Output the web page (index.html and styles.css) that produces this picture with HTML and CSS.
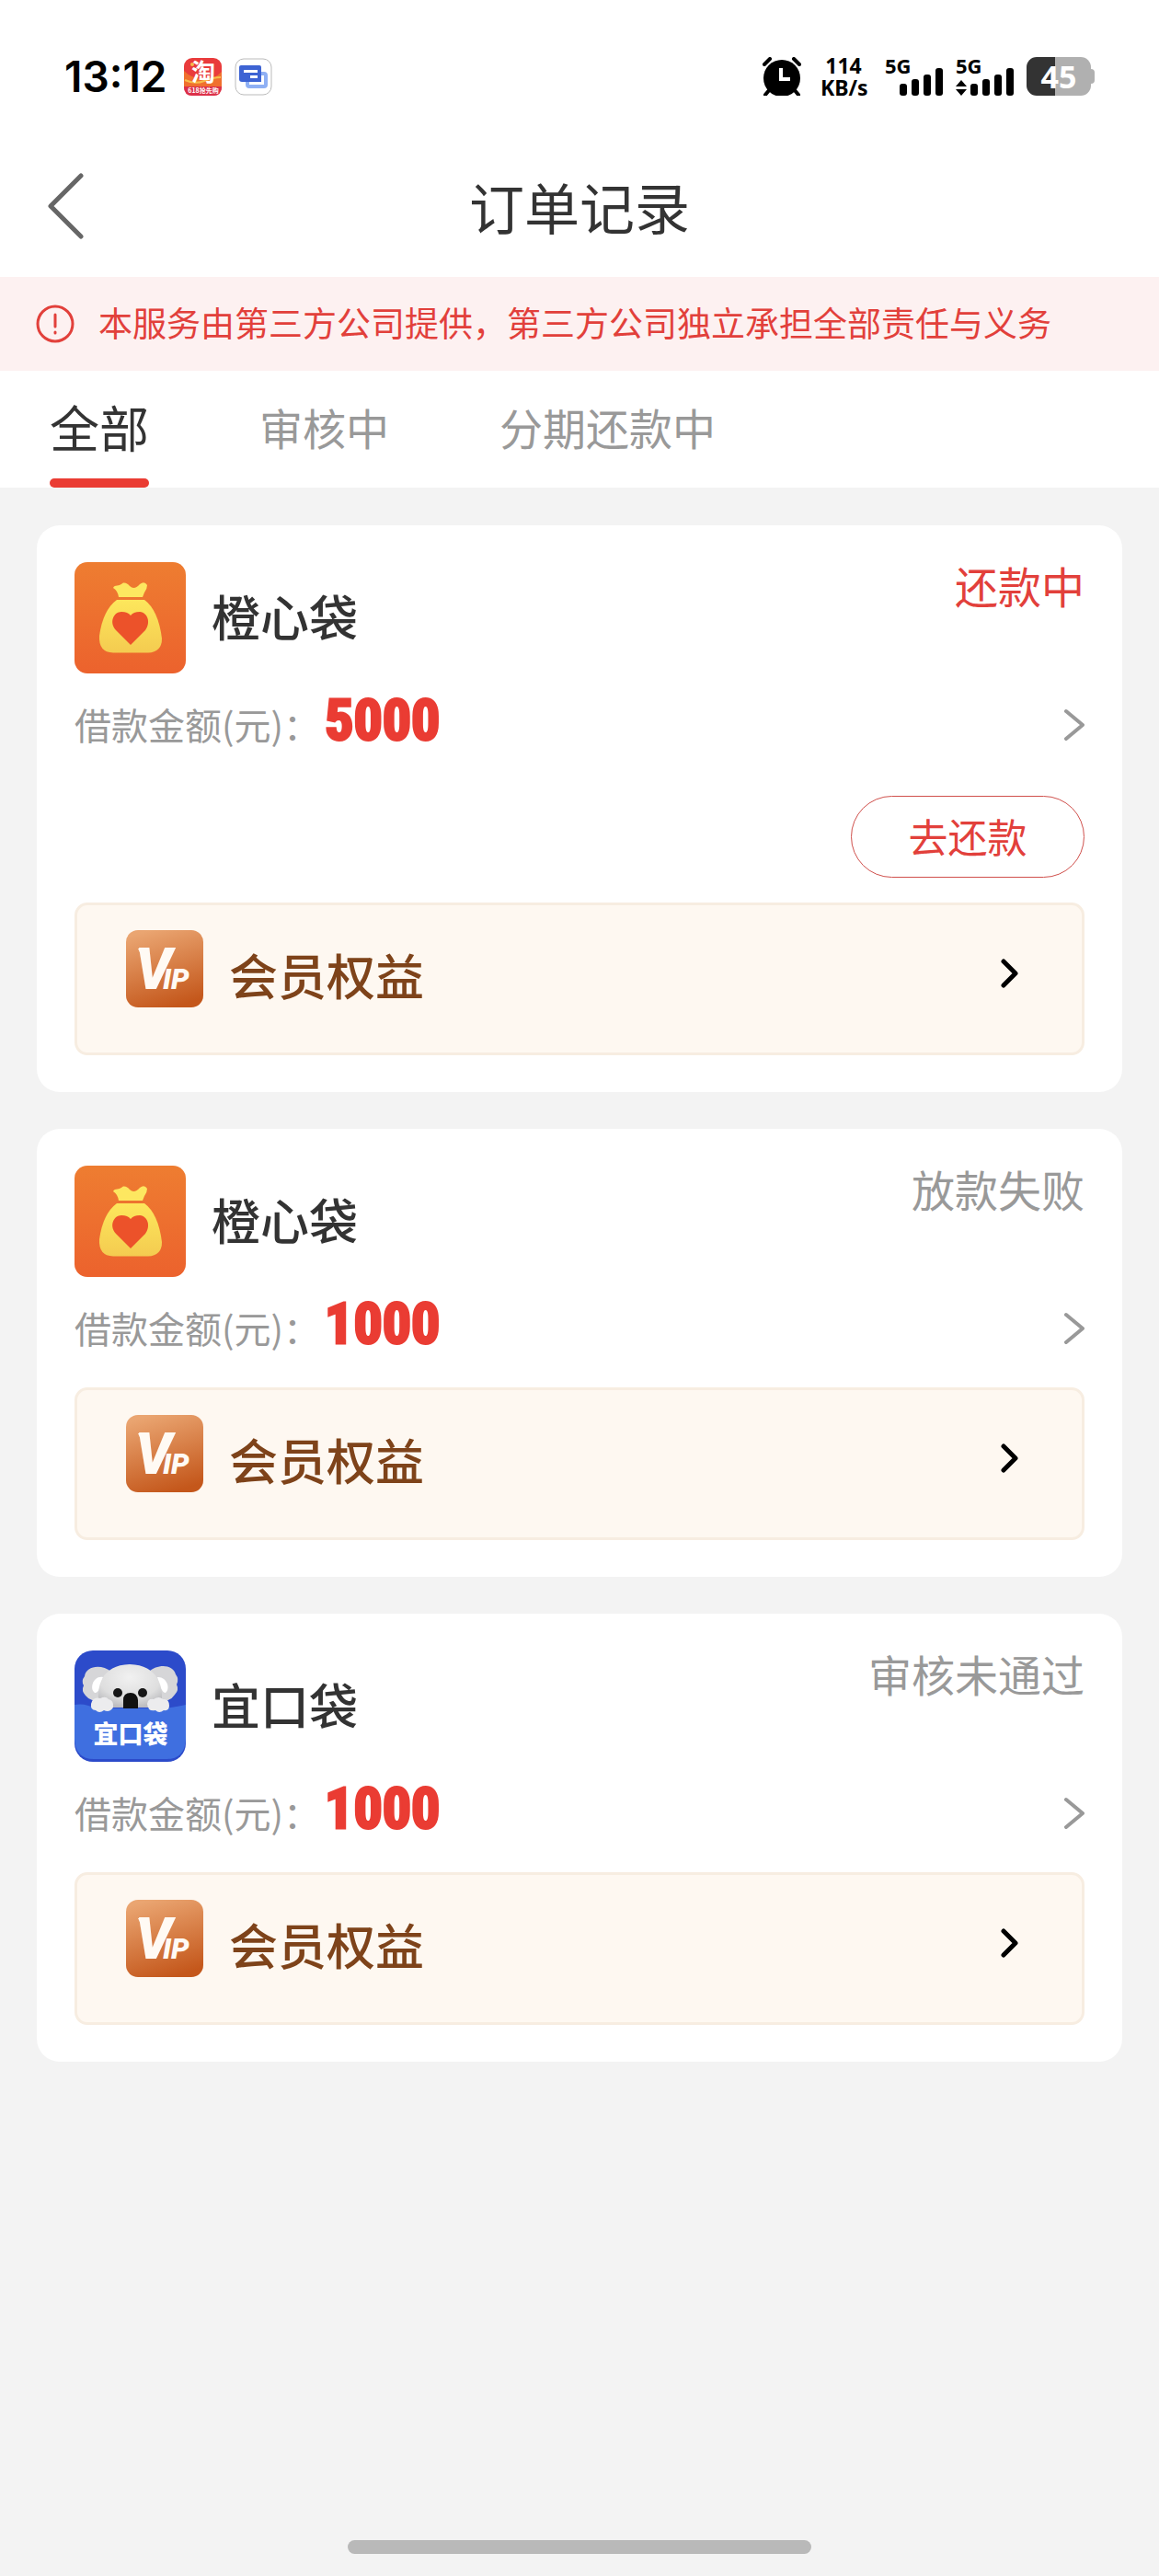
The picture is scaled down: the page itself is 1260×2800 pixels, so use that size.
FILE: index.html
```html
<!DOCTYPE html>
<html lang="zh-CN">
<head>
<meta charset="utf-8">
<meta name="viewport" content="width=device-width, initial-scale=1">
<title>订单记录</title>
<link rel="stylesheet" href="styles.css">
</head>
<body>
<svg class="defs" width="0" height="0" aria-hidden="true">
  <defs>
    <linearGradient id="orange" x1="0" y1="0" x2="0" y2="1"><stop offset="0" stop-color="#ee7d31"/><stop offset="1" stop-color="#ec622d"/></linearGradient>
    <linearGradient id="gold" x1="0" y1="0" x2="0" y2="1"><stop offset="0" stop-color="#fde75c"/><stop offset="1" stop-color="#f4cb50"/></linearGradient>
    <linearGradient id="copper" x1="0.3" y1="0" x2="0.6" y2="1"><stop offset="0" stop-color="#eaa571"/><stop offset="1" stop-color="#c4571b"/></linearGradient>
    <radialGradient id="fur" cx="0.5" cy="0.3" r="0.7"><stop offset="0" stop-color="#f1f1f1"/><stop offset="0.7" stop-color="#dedede"/><stop offset="1" stop-color="#bdbdc0"/></radialGradient>
    <symbol id="bag" viewBox="0 0 121 121">
      <rect width="121" height="121" rx="14" fill="url(#orange)"/>
      <path d="M42 28C44 24 48 27 53 22.500Q57 22 60 26Q65 31 71 24Q76 20 79 25Q79 29 76 33L74 38H48Q47 31 42 28Z" fill="#fde760"/>
      <path d="M46 41H76Q91 52 95 83Q95 98 80 98.500H42Q26 98 27 80Q31 52 46 41Z" fill="url(#gold)"/>
      <path d="M61 90L45 74C37 65 43 54 51 54Q58 54 61 58Q64 54 71 54C80 55 83 66 77 74Z" fill="#ec522a"/>
    </symbol>
    <symbol id="koala" viewBox="0 0 121 121">
      <rect width="121" height="121" rx="20" fill="#2c4bca"/>
      <path d="M40 23C29 14 12 17 11 28Q7 33 10 38Q7 44 12 49Q17 56 33 56H90Q104 56 109 48Q114 43 111 37Q114 31 110 26C107 14 89 15 81 23Z" fill="#d6d6d8"/>
      <path d="M31 29C20 27 16 42 22 46Q27 47 31 29ZM90 29C100 28 105 41 99 46Q94 46 90 29Z" fill="#fff"/>
      <path d="M27 62C23 39 29 16 60 15C91 16 98 39 94 62Z" fill="url(#fur)"/>
      <circle cx="47" cy="46" r="5" fill="#161616"/><circle cx="74" cy="46" r="5" fill="#161616"/>
      <path d="M53 65V54Q53 46 61 46Q68 46 69 54V65Z" fill="#111"/>
      <path d="M0 59Q12 57 22 63H98Q112 61 121 59V96Q120 118 100 118H21Q1 118 0 96Z" fill="#3f6fe0"/>
      <path d="M18 58Q20 50 28 52Q34 49 37 53Q43 54 42 62Q38 68 32 65Q27 69 23 65Q17 65 18 58ZM79 58Q80 52 86 53Q92 49 96 53Q103 52 103 60Q103 66 97 65Q92 69 88 65Q80 67 79 58Z" fill="#ececee"/>
      <text class="koala-word" x="61" y="101" text-anchor="middle">宜口袋</text>
    </symbol>
    <symbol id="vip" viewBox="0 0 84 84">
      <rect width="84" height="84" rx="13" fill="url(#copper)"/>
      <path d="M13 20H24V24H15Z" fill="#fffaf4"/>
      <text class="vip-v" x="10" y="64">V</text>
      <text class="vip-ip" x="40" y="64">IP</text>
    </symbol>
    <symbol id="chevron" viewBox="0 0 22 36"><path d="M2 3L20 18L2 33" fill="none" stroke="currentColor" stroke-width="4" stroke-linecap="round" stroke-linejoin="round"/></symbol>
    <symbol id="chevron-bold" viewBox="0 0 20 34"><path d="M3 4L16 17L3 30" fill="none" stroke="currentColor" stroke-width="5" stroke-linecap="round" stroke-linejoin="round"/></symbol>
    <symbol id="bars" viewBox="0 0 48 30"><rect y="17" width="8" height="13" rx="3"/><rect x="13" y="12" width="8" height="18" rx="3"/><rect x="26" y="7" width="8" height="23" rx="3"/><rect x="39" width="8" height="30" rx="3"/></symbol>
  </defs>
</svg>

<div class="screen">
  <div class="statusbar">
    <div class="status-left">
      <span class="clock">13:12</span>
      <svg class="app" viewBox="0 0 41 41" role="img" aria-label="淘宝">
        <rect width="41" height="41" rx="9" fill="#e93b3c"/>
        <path d="M0 14Q8 22 20 23T41 15V31H0Z" fill="#f0702e"/>
        <path d="M1 24Q12 29 22 25T40 21" fill="none" stroke="#f7bd4b" stroke-width="2"/>
        <circle cx="9" cy="7" r="2" fill="#f7bd4b"/>
        <path d="M0 31H41Q41 41 32 41H9Q0 41 0 31Z" fill="#dc3049"/>
        <text class="tao-word" x="21" y="25" text-anchor="middle">淘</text>
        <text class="tao-tag" x="21" y="38" text-anchor="middle">618抢先购</text>
      </svg>
      <svg class="app" viewBox="0 0 41 41" aria-hidden="true">
        <rect x="1" y="1" width="39" height="39" rx="9" fill="#fff" stroke="#bbb"/>
        <rect x="14" y="17" width="20" height="14" rx="2" fill="none" stroke="#8fb0f4" stroke-width="4"/>
        <path d="M7 8H27Q29 8 29 10V26H8Q5 26 5 23V10Q5 8 7 8Z" fill="#3d63d3"/>
        <path d="M10 13H25V16H10ZM17 19H25V22H17Z" fill="#fff"/>
      </svg>
    </div>
    <div class="status-right">
      <svg class="alarm" viewBox="0 0 44 42" aria-hidden="true">
        <path d="M3 8L9 2M41 8L35 2M9 35L4 41M35 35L40 41" stroke="#000" stroke-width="4" stroke-linecap="round"/>
        <circle cx="22" cy="23" r="20"/>
        <path d="M21 12V24H31" fill="none" stroke="#fff" stroke-width="4"/>
      </svg>
      <div class="speed"><span>114</span><span>KB/s</span></div>
      <div class="signal"><span>5G</span><svg class="bars"><use href="#bars"/></svg></div>
      <div class="signal"><span>5G</span><svg class="updown" viewBox="0 0 12 17" aria-hidden="true"><path d="M6 0L12 7H0ZM6 17L0 10H12Z"/></svg><svg class="bars"><use href="#bars"/></svg></div>
      <div class="battery"><span>45</span></div>
    </div>
  </div>

  <header class="navbar">
    <button class="back" type="button" aria-label="返回"><svg viewBox="0 0 40 72"><path d="M37 3L4 36L37 69" fill="none" stroke="#666" stroke-width="5" stroke-linecap="round" stroke-linejoin="round"/></svg></button>
    <h1>订单记录</h1>
  </header>

  <div class="notice">
    <svg viewBox="0 0 42 42" aria-hidden="true"><circle cx="21" cy="21" r="19" fill="none" stroke="#e2403b" stroke-width="3"/><path d="M21 11V24M21 30V31" stroke="#e2403b" stroke-width="3" stroke-linecap="round"/></svg>
    <p>本服务由第三方公司提供，第三方公司独立承担全部责任与义务</p>
  </div>

  <nav class="tabs">
    <a class="tab active" href="#all" aria-current="page">全部</a>
    <a class="tab" href="#review">审核中</a>
    <a class="tab" href="#repay">分期还款中</a>
  </nav>

  <main class="orders">
    <article class="card">
      <div class="head">
        <svg class="logo" aria-hidden="true"><use href="#bag"/></svg>
        <h2>橙心袋</h2>
        <span class="state due">还款中</span>
      </div>
      <a class="amount" href="#order1"><span class="label">借款金额(元)：</span><strong>5000</strong><svg class="go"><use href="#chevron"/></svg></a>
      <div class="actions"><button class="repay" type="button">去还款</button></div>
      <a class="member" href="#vip"><svg class="vip"><use href="#vip"/></svg><span>会员权益</span><svg class="more"><use href="#chevron-bold"/></svg></a>
    </article>

    <article class="card">
      <div class="head">
        <svg class="logo" aria-hidden="true"><use href="#bag"/></svg>
        <h2>橙心袋</h2>
        <span class="state">放款失败</span>
      </div>
      <a class="amount" href="#order2"><span class="label">借款金额(元)：</span><strong>1000</strong><svg class="go"><use href="#chevron"/></svg></a>
      <a class="member" href="#vip"><svg class="vip"><use href="#vip"/></svg><span>会员权益</span><svg class="more"><use href="#chevron-bold"/></svg></a>
    </article>

    <article class="card">
      <div class="head">
        <svg class="logo" aria-hidden="true"><use href="#koala"/></svg>
        <h2>宜口袋</h2>
        <span class="state">审核未通过</span>
      </div>
      <a class="amount" href="#order3"><span class="label">借款金额(元)：</span><strong>1000</strong><svg class="go"><use href="#chevron"/></svg></a>
      <a class="member" href="#vip"><svg class="vip"><use href="#vip"/></svg><span>会员权益</span><svg class="more"><use href="#chevron-bold"/></svg></a>
    </article>
  </main>

  <div class="home-indicator"></div>
</div>
</body>
</html>
```
FILE: styles.css
```css
* { box-sizing: border-box; }
body {
  margin: 0;
  background: #f3f3f3;
  color: #333;
  font-family: "Noto Sans CJK SC", sans-serif;
}
h1, h2, p { margin: 0; font-weight: 400; }
a { color: inherit; text-decoration: none; }
button { padding: 0; border: 0; background: none; font: inherit; cursor: pointer; }
svg { display: block; flex: none; }
.defs { position: absolute; }

.screen { display: flex; flex-direction: column; min-height: 100vh; }

/* system status bar */
.statusbar {
  display: flex;
  justify-content: space-between;
  height: 149px;
  padding: 62px 70px 0;
  background: #fff;
  color: #000;
  font-family: Inter, sans-serif;
}
.status-left, .status-right { display: flex; align-items: center; height: 42px; }
.status-left { gap: 14px; }
.clock { margin-right: 4px; font-size: 46px; line-height: 42px; font-weight: 600; }
.app { width: 41px; height: 41px; }
.tao-word { fill: #fff; font: 700 26px "Noto Sans CJK SC", sans-serif; }
.tao-tag { fill: #fff; font: 700 7px "Noto Sans CJK SC", sans-serif; }
.alarm { width: 44px; height: 42px; margin-right: 20px; }
.speed {
  display: flex;
  flex-direction: column;
  width: 50px;
  margin-right: 20px;
  font: 700 23px/24px "Noto Sans", sans-serif;
  text-align: center;
}
.signal {
  display: grid;
  grid-template-columns: 16px 48px;
  align-items: end;
  position: relative;
  width: 64px;
  height: 42px;
  margin-right: 13px;
}
.signal span { position: absolute; left: 0; top: 0; font: 700 22px/18px "Noto Sans", sans-serif; }
.bars { grid-column: 2; grid-row: 1; width: 48px; height: 30px; }
.updown { grid-column: 1; grid-row: 1; width: 12px; height: 17px; }
.battery {
  position: relative;
  width: 70px;
  height: 42px;
  margin-right: 4px;
  border-radius: 11px;
  background: linear-gradient(90deg, #333 31px, #b0b0b0 31px);
  color: #fff;
  text-align: center;
  font: 700 34px/42px "Noto Sans", sans-serif;
}
.battery::after {
  content: "";
  position: absolute;
  left: 70px;
  top: 13px;
  width: 4px;
  height: 16px;
  border-radius: 0 4px 4px 0;
  background: #b0b0b0;
}

/* title bar */
.navbar {
  display: grid;
  grid-template-columns: 1fr auto 1fr;
  align-items: center;
  height: 152px;
  padding: 0 51px 2px;
  background: #fff;
}
.back { width: 40px; height: 72px; }
.back svg { width: 40px; height: 72px; }
.navbar h1 { font-size: 60px; line-height: 80px; }

.notice {
  display: flex;
  align-items: center;
  gap: 26px;
  min-height: 102px;
  padding: 0 39px;
  background: #fdf1f1;
  color: #e2403b;
  font-size: 37px;
  line-height: 52px;
}
.notice svg { width: 42px; height: 42px; }
.notice p { padding-bottom: 4px; }

.tabs {
  display: flex;
  gap: 120px;
  height: 127px;
  padding: 0 54px;
  background: #fff;
}
.tab {
  display: flex;
  align-items: center;
  padding-top: 5px;
  border-bottom: 10px solid transparent;
  color: #999;
  font-size: 47px;
  line-height: 72px;
}
.tab.active { position: relative; color: #333; font-size: 54px; }
.tab.active::after {
  content: "";
  position: absolute;
  left: 0;
  right: 0;
  bottom: -10px;
  height: 10px;
  border-radius: 5px;
  background: #ea3c33;
}

/* order cards */
.orders { display: flex; flex-direction: column; gap: 40px; padding: 41px 40px; }
.card { padding: 40px 41px; border-radius: 25px; background: #fff; }
.head { display: flex; align-items: center; }
.logo { width: 121px; height: 121px; }
.head h2 { margin-left: 28px; padding-bottom: 6px; font-size: 53px; line-height: 72px; font-weight: 500; }
.state { align-self: flex-start; margin-left: auto; color: #999; font-size: 47px; line-height: 50px; }
.state.due { color: #e2403b; }
.amount { display: flex; align-items: center; height: 112px; }
.label { padding-bottom: 2px; color: #999; font-size: 40px; line-height: 56px; }
.amount strong {
  margin-left: 5px;
  padding-bottom: 10px;
  color: #ea3c33;
  font: 700 62px/72px "Liberation Sans Narrow", "Roboto Condensed", Roboto, sans-serif;
  -webkit-text-stroke: 3px #ea3c33;
}
.go { width: 22px; height: 36px; margin-left: auto; color: #999; }
.actions { display: flex; justify-content: flex-end; padding: 21px 0 19px; }
.repay {
  width: 254px;
  height: 89px;
  padding-bottom: 4px;
  border: 1px solid #d0504c;
  border-radius: 45px;
  color: #e2403b;
  font-size: 43px;
  line-height: 60px;
}
.member {
  display: flex;
  align-items: flex-start;
  height: 166px;
  margin-top: 8px;
  padding: 27px 68px 0 53px;
  border: 3px solid #f7ede1;
  border-radius: 14px;
  background: #fef8f1;
  color: #7e431a;
}
.vip { width: 84px; height: 84px; }
.vip-v { fill: #fffaf4; font: italic 900 62px Roboto, sans-serif; }
.vip-ip { fill: #fffaf4; font: italic 900 31px Roboto, sans-serif; }
.koala-word { fill: #fff; font: 900 27px "Noto Sans CJK SC", sans-serif; }
.member span { padding-top: 8px; margin-left: 28px; font-size: 53px; line-height: 80px; font-weight: 500; }
.more { width: 20px; height: 34px; margin: 30px 0 0 auto; color: #000; }

.home-indicator {
  width: 40%;
  height: 15px;
  margin: auto auto 24px;
  border-radius: 8px;
  background: #b9b9b9;
}
```
